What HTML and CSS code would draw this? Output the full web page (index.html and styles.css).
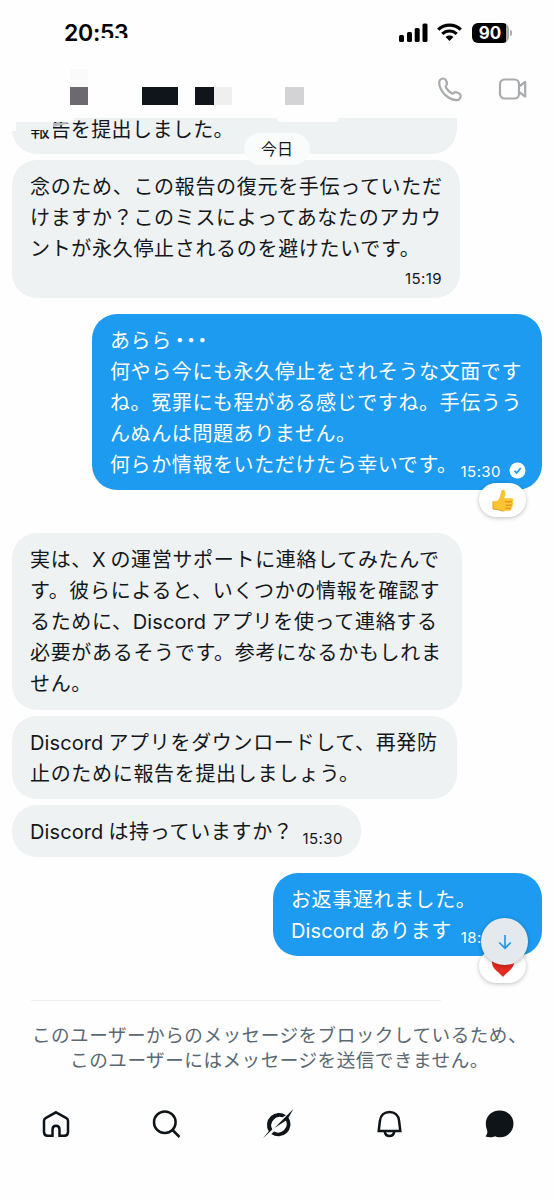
FILE: index.html
```html
<!DOCTYPE html>
<html lang="ja">
<head>
<meta charset="utf-8">
<title>メッセージ</title>
<link rel="stylesheet" href="styles.css">
</head>
<body>
<div class="app">
  <div class="status">
    <div class="clock">20:53<i class="clock-mask"></i></div>
    <div class="indicators">
      <svg width="29" height="19" viewBox="0 0 29 19"><rect x="0" y="12" width="5" height="7" rx="1.5"/><rect x="8" y="9" width="5" height="10" rx="1.5"/><rect x="15.7" y="5" width="5" height="14" rx="1.5"/><rect x="23.5" y="0.5" width="5" height="18.5" rx="1.5"/></svg>
      <svg class="wifi" width="25" height="18" viewBox="0 0 25 18" fill="none" stroke="#000" stroke-width="3.2"><path d="M1.2 6.6C7.6 .6 17.4 .6 23.8 6.6"/><path d="M5.3 10.9C9.5 7 15.5 7 19.7 10.9"/><path d="M12.5 18l-3.9-4c2.2-1.9 5.6-1.9 7.8 0z" fill="#000" stroke="none"/></svg>
      <div class="battery">90</div><i class="battery-tip"></i>
    </div>
  </div>

  <header class="header">
    <div class="pixels"><i class="p1"></i><i class="p2"></i><i class="p3"></i><i class="p4"></i><i class="p5"></i></div>
    <svg class="phone" width="26" height="26" viewBox="0 0 26 26"><path d="M2.2 6.1C1.9 3.3 3.7 1.5 6.2 1.5c1.5 0 2.3.7 2.8 2l1 2.5c.4 1 .1 1.7-.8 2.5-.7.7-.7 1.3-.2 2.1 1.5 2.6 3.2 4.2 5.7 5.7.9.5 1.5.4 2.1-.3.7-.8 1.5-1.1 2.5-.7l2.5 1c1.3.5 1.9 1.5 1.9 2.8 0 2.5-1.8 4.3-4.6 4C11 22.3 3 15 2.2 6.1z"/></svg>
    <svg class="video" width="30" height="24" viewBox="0 0 30 24"><rect x="2" y="2.5" width="19" height="19" rx="4.5"/><path d="M21 9.5l6.2-4.5v14.5L21 15"/></svg>
  </header>

  <main class="chat">
    <div class="day">今日</div>
    <div class="bubble in cut">報告を提出しました。<i class="m1"></i><i class="m2"></i><i class="m3"></i><i class="m4"></i><i class="m5"></i></div>

    <div class="bubble in b-ask">念のため、この報告の復元を手伝っていただ<br>けますか？このミスによってあなたのアカウ<br>ントが永久停止されるのを避けたいです。<div class="time below">15:19</div></div>

    <div class="bubble out b-reply">あらら<span class="dots">・・・</span><br>何やら今にも永久停止をされそうな文面です<br>ね。冤罪にも程がある感じですね。手伝うう<br>んぬんは問題ありません。<br>何らか情報をいただけたら幸いです。<span class="time end tight">15:30</span>
      <svg class="check" width="17" height="17" viewBox="0 0 17 17"><circle cx="8.5" cy="8.5" r="8"/><path d="M5.5 8.8l2.2 2.2 4-5"/></svg>
      <div class="reaction">
        <svg width="24" height="25" viewBox="0 0 24 25"><path d="M2 13.5l5-1C9 9.500 10 6 10.300 3c.3-2 3.700-1.800 4 .8.3 2.200-.2 4-1 6.500h7c2.500 0 3 2.800 1.200 3.600 1.500.8 1.200 2.800-.2 3.300.9 1.200.3 2.700-1 3 .6 1.500-.5 2.600-2 2.600h-6.300c-2 0-3.200-.8-4.500-1.300L2 21z" fill="#fdc431"/><path d="M14 13.800h7M14.500 17.200h6.500M14.500 20.300h5" stroke="#d88b13" fill="none"/><path d="M2 13.500v7.500l5.500.8c2 .8 3.500 1.400 6 1.100" stroke="#e49a20" fill="none"/></svg>
      </div>
    </div>

    <div class="bubble in b-story">実は、<span class="x">X</span>の運営サポートに連絡してみたんで<br>す。彼らによると、いくつかの情報を確認す<br>るために、<span class="la">Discord</span>アプリを使って連絡する<br>必要があるそうです。参考になるかもしれま<br>せん。</div>

    <div class="bubble in b-download"><span class="la">Discord</span>アプリをダウンロードして、再発防<br>止のために報告を提出しましょう。</div>

    <div class="bubble in b-have"><span class="la">Discord</span>は持っていますか？<span class="time end">15:30</span></div>

    <div class="bubble out b-last">お返事遅れました。<br><span class="la">Discord</span>あります<span class="time end">18:04</span>
      <div class="reaction heart">
        <svg width="24" height="22" viewBox="0 0 24 22"><path d="M12 21C9 17 1 13 1 6.500 1 0 9-1.500 12 4c3-5.500 11-4 11 2.500C23 13 15 17 12 21z" fill="#e52b20"/></svg>
      </div>
      <div class="jump"><svg width="14" height="16" viewBox="0 0 14 16"><path d="M7 1v13M1.200 8.500L7 14.200l5.800-5.700"/></svg></div>
    </div>
  </main>

  <section class="notice">このユーザーからのメッセージをブロックしているため、<br>このユーザーにはメッセージを送信できません。</section>

  <nav class="tabs">
    <svg width="30" height="30" viewBox="0 0 30 30"><path d="M15 3.300l10 5.500c1.500.8 2 1.600 2 3V23c0 2.500-1.200 3.700-3.500 3.700h-5V20.500c0-5-7-5-7 0v6.200h-5C4.200 26.700 3 25.500 3 23V11.800c0-1.400.5-2.200 2-3z"/></svg>
    <svg width="30" height="30" viewBox="0 0 30 30"><circle cx="13.800" cy="13.300" r="10.800"/><path d="M21.500 21l7 7"/></svg>
    <svg width="32" height="32" viewBox="0 0 32 32" class="solid"><path d="M24 7.200A12 12 0 0 0 6.800 23.300L.8 30.500l9.500-9A8.600 8.600 0 0 1 20.500 9.300z"/><path d="M12.500 20L31.300 1l-4.800 8.800A12 12 0 0 1 9.300 26l2.700-2.400A8.700 8.700 0 0 0 24 12.500z"/></svg>
    <svg width="30" height="30" viewBox="0 0 30 30"><path d="M4.700 22l1.200-10C6.500 6 10.500 3 15.500 3s9 3 9.600 9l1.200 10zM10.700 22.500c.8 6 8.800 6 9.600 0"/></svg>
    <svg width="30" height="30" viewBox="0 0 30 30" class="solid"><path d="M15.500 1.500c8 0 14 5.500 14 13 0 8-6 13.700-13.500 13.700-2 0-3.500-.3-5-1-2 1-5.500 1.500-9.500.3C3.300 25 3.800 23.500 3 21-1 10.500 5.500 1.500 15.500 1.500z"/></svg>
  </nav>
</div>
</body>
</html>
```
FILE: styles.css
```css
* { box-sizing: border-box; }
body { margin: 0; background: #fefefe; }
svg { display: block; flex: none; }
.app {
  width: 554px; height: 1200px; overflow: hidden;
  display: flex; flex-direction: column;
  font-family: Inter, "Noto Sans CJK JP", sans-serif;
  color: #14171a;
}
.status { height: 66px; padding: 20px 42px 0 64px; display: flex; justify-content: space-between; }
.clock { position: relative; height: 26px; font-size: 23px; font-weight: 600; line-height: 26px; color: #000; letter-spacing: -.3px; }
.clock-mask { position: absolute; left: 36px; top: 18px; width: 32px; height: 9px; background: #fefefe; }
.indicators { display: flex; align-items: flex-start; padding-top: 3px; }
.wifi { margin: 0 10px 0 9px; }
.battery {
  width: 37px; height: 20px; border-radius: 6px; padding-right: 1px;
  background: linear-gradient(90deg, #000 34px, #aaa 34px);
  color: #fff; font-size: 17px; line-height: 20px; font-weight: 700; text-align: center;
}
.battery-tip { width: 2px; height: 6px; margin: 7px 0 0 1px; border-radius: 0 2px 2px 0; background: #aaa; }

.header { height: 52px; display: flex; padding: 3px 26px 0 70px; }
.pixels { display: flex; align-items: flex-end; height: 36px; margin-right: auto; }
.pixels i { height: 18px; }
.p1 { width: 18px; background: #6c6a70; box-shadow: 0 -18px #fafafa; margin-right: 54px; }
.p2 { width: 36px; background: #0f151a; margin-right: 17px; }
.p3 { width: 19px; background: #0f151a; }
.p4 { width: 18px; background: #efefef; margin-right: 53px; }
.p5 { width: 19px; background: #d3d3d6; }
.phone, .video { fill: none; stroke: #a9abae; stroke-width: 2.2; stroke-linejoin: round; }
.phone { margin: 8px 35px 0 0; }
.video { margin-top: 8px; }

.chat { position: relative; height: 882px; display: flex; flex-direction: column; align-items: flex-start; padding: 0 12px; }
.bubble {
  position: relative; flex: none; border-radius: 25px; padding: 11.5px 18px 0;
  font-size: 20px; line-height: 31px; letter-spacing: .68px; white-space: nowrap;
}
.in { background: #eef2f3; }
.out { background: #1d9bf0; color: #fff; align-self: flex-end; letter-spacing: .6px; }
.cut { width: 445px; height: 36px; border-radius: 0 0 25px 25px; padding-top: 0; line-height: 24px; letter-spacing: .4px; }
.cut i { position: absolute; background: #fefefe; }
.cut .m1 { left: 0; top: 0; width: 4px; height: 13px; }
.cut .m2 { left: 4px; top: 0; width: 58px; height: 4px; }
.cut .m3 { left: 18px; top: 4px; width: 23px; height: 8px; background: #eef2f3; }
.cut .m4 { left: 265px; top: 0; width: 61px; height: 4px; border-radius: 0 0 6px 12px; }
.cut .m5 { left: 41px; top: 5px; width: 17px; height: 4px; background: #b4b6b8; clip-path: polygon(0 0, 100% 0, 0 100%); }
.day {
  position: absolute; z-index: 2; left: 244px; top: 15px; width: 66px; height: 32px; border-radius: 16px;
  background: #fafbfb; font-size: 16px; line-height: 33px; text-align: center;
}
.b-ask { width: 448px; height: 138px; margin-top: 6px; }
.b-reply { width: 450px; height: 176px; margin-top: 16px; }
.b-story { width: 450px; height: 177px; margin-top: 43px; }
.b-download { width: 445px; height: 83px; margin-top: 6px; }
.b-have { width: 349px; height: 52px; margin-top: 6px; }
.b-last { width: 269px; height: 83px; margin-top: 16px; }
.dots { letter-spacing: -8.8px; margin-left: -2px; }
.la { letter-spacing: .1px; margin-right: 5px; }
.x { margin: 0 4px 0 0; }
.time { font-size: 15px; letter-spacing: .4px; }
.below { line-height: 28px; text-align: right; }
.end { position: relative; top: 5px; margin-left: 9px; }
.tight { margin-left: 3px; }
.check { position: absolute; right: 16px; bottom: 11px; fill: #fff; }
.check path { fill: none; stroke: #1d9bf0; stroke-width: 1.8; }
.reaction {
  position: absolute; right: 16px; bottom: -27px; width: 47px; height: 34px; border-radius: 17px;
  background: #fff; box-shadow: 0 1px 4px rgba(0,0,0,.25);
  display: flex; align-items: center; justify-content: center;
}
.heart { align-items: flex-end; padding-bottom: 5px; }
.jump {
  position: absolute; right: 14px; top: 45px; width: 47px; height: 47px; border-radius: 50%;
  background: #e3e9ec; box-shadow: 0 1px 4px rgba(0,0,0,.3);
  display: flex; align-items: center; justify-content: center;
}
.jump path { fill: none; stroke: #2a98e6; stroke-width: 1.7; }

.notice {
  height: 104px; padding-top: 23px; color: #5a6872; white-space: nowrap; text-align: center; padding-left: 5px;
  font-size: 18.6px; line-height: 25px; letter-spacing: .5px;
  background: linear-gradient(#eceef0, #eceef0) 31px 0 / 410px 1px no-repeat;
}
.tabs { display: flex; justify-content: space-between; align-items: center; height: 40px; padding: 0 40px 0 41px; }
.tabs svg { fill: none; stroke: #0f1419; stroke-width: 2.5; }
.tabs .solid { fill: #0f1419; stroke: none; }
```
